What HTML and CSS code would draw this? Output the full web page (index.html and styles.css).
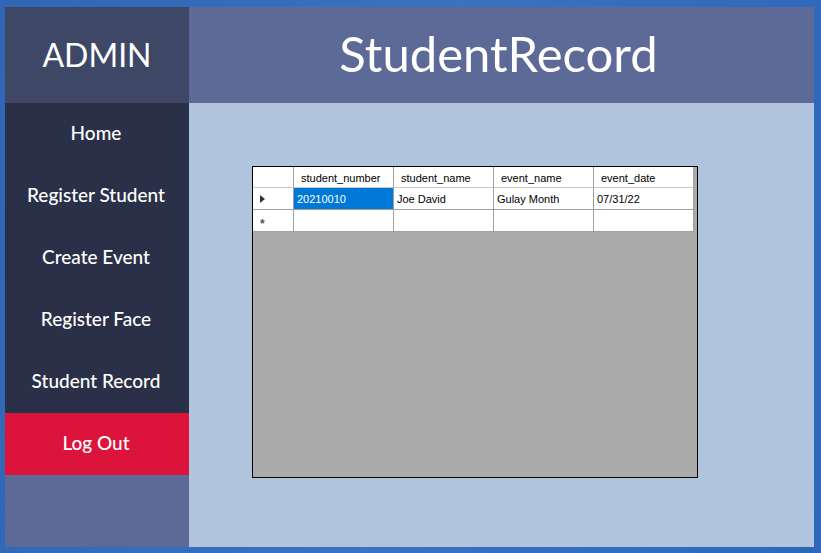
FILE: index.html
```html
<!DOCTYPE html>
<html>
<head>
<meta charset="utf-8">
<link rel="stylesheet" href="styles.css">
</head>
<body>
<div class="window">
  <div class="brand">ADMIN</div>
  <div class="title">StudentRecord</div>
  <nav class="side">
    <div class="item">Home</div>
    <div class="item">Register Student</div>
    <div class="item">Create Event</div>
    <div class="item">Register Face</div>
    <div class="item">Student Record</div>
    <div class="item logout">Log Out</div>
    <div class="side-rest"></div>
  </nav>
  <main class="content">
    <div class="grid">
      <div class="row head">
        <div class="rh"></div>
        <div class="c">student_number</div>
        <div class="c">student_name</div>
        <div class="c">event_name</div>
        <div class="c">event_date</div>
      </div>
      <div class="row">
        <div class="rh"><span class="tri"></span></div>
        <div class="c sel">20210010</div>
        <div class="c">Joe David</div>
        <div class="c">Gulay Month</div>
        <div class="c">07/31/22</div>
      </div>
      <div class="row">
        <div class="rh"><span class="star">*</span></div>
        <div class="c"></div>
        <div class="c"></div>
        <div class="c"></div>
        <div class="c"></div>
      </div>
    </div>
  </main>
</div>
</body>
</html>
```

FILE: styles.css
```css
html, body {
  margin: 0;
  height: 100%;
}
body {
  width: 821px;
  height: 553px;
  box-sizing: border-box;
  padding: 7px 7px 6px 5px;
  background: linear-gradient(100deg, #2f66b6 0%, #3a72c0 50%, #2e67b8 100%);
  overflow: hidden;
}
.window {
  height: 100%;
  display: grid;
  grid-template-columns: 184px 1fr;
  grid-template-rows: 96px 1fr;
  font-family: "Lato", "Open Sans", sans-serif;
  color: #fff;
}
.brand {
  background: #3e4766;
  display: flex;
  align-items: center;
  justify-content: center;
  font-size: 32px;
  padding-bottom: 2px;
}
.title {
  background: #5d6a97;
  display: flex;
  align-items: center;
  justify-content: center;
  font-size: 49px;
  padding-bottom: 4px;
  padding-right: 6px;
}
.side {
  display: flex;
  flex-direction: column;
  background: #2a3047;
}
.item {
  height: 62px;
  display: flex;
  align-items: center;
  justify-content: center;
  font-size: 19px;
  font-weight: 500;
  padding-bottom: 4px;
  padding-right: 2px;
  box-sizing: border-box;
}
.logout {
  background: #dc143c;
}
.side-rest {
  flex: 1;
  background: #5d6a97;
}
.content {
  background: #b0c4de;
  padding: 63px;
}
.grid {
  width: 446px;
  height: 312px;
  box-sizing: border-box;
  border: 1px solid #000;
  background: #ababab;
  font-family: "Liberation Sans", Arial, sans-serif;
  font-size: 11px;
  color: #000;
}
.row {
  display: flex;
  height: 22px;
}
.row.head {
  height: 21px;
}
.rh {
  width: 41px;
  background: #fff;
  border-right: 1px solid #a0a0a0;
  border-bottom: 1px solid #a0a0a0;
  display: flex;
  align-items: center;
  padding-left: 7px;
  box-sizing: border-box;
}
.c {
  width: 100px;
  background: #fff;
  border-right: 1px solid #a0a0a0;
  border-bottom: 1px solid #a0a0a0;
  box-sizing: border-box;
  display: flex;
  align-items: center;
  padding-left: 3px;
  white-space: nowrap;
}
.head .c {
  padding-left: 7px;
  padding-top: 1px;
}
.head .c, .head .rh {
  border-bottom-color: #c8c8c8;
}
.c.sel {
  background: #0078d7;
  color: #fff;
}
.tri {
  width: 0;
  height: 0;
  border-top: 4px solid transparent;
  border-bottom: 4px solid transparent;
  border-left: 5px solid #333;
}
.star {
  font-size: 12px;
  font-weight: bold;
  color: #555;
  padding-top: 6px;
}
```
